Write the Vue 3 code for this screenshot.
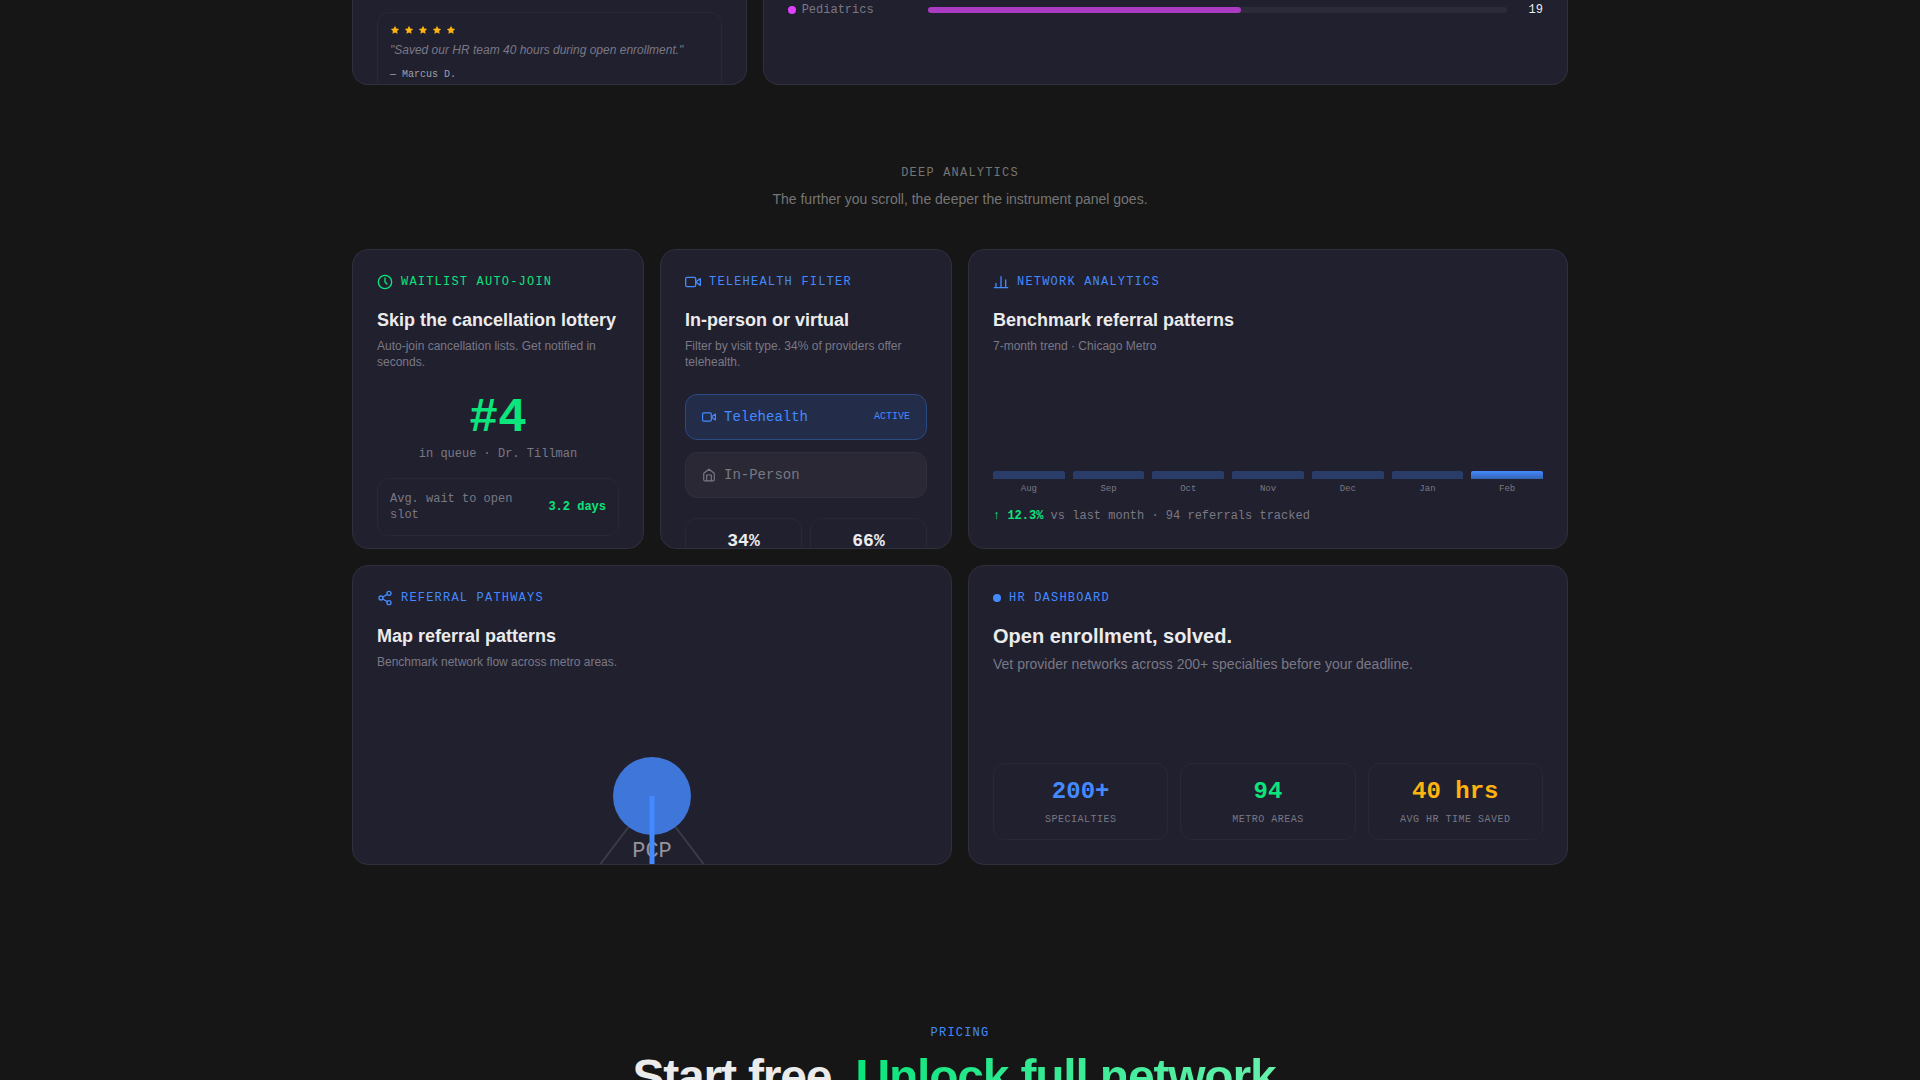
<script setup>
const specialties = [{ name: 'Pediatrics', share: 54, count: 19 }]
const months = ['Aug', 'Sep', 'Oct', 'Nov', 'Dec', 'Jan', 'Feb']
const hrStats = [
  { value: '200+', label: 'Specialties', tone: 'blue' },
  { value: '94', label: 'Metro areas', tone: 'green' },
  { value: '40 hrs', label: 'Avg HR time saved', tone: 'amber' }
]
</script>

<template>
  <main class="page">
    <section class="top-grid">
      <article class="card reviews">
        <div class="review">
          <div class="stars" role="img" aria-label="5 stars">
            <svg v-for="n in 5" :key="n" viewBox="0 0 24 24" width="10" height="10">
              <path fill="currentColor" d="M12 2l3.100 6.300 6.900 1-5 4.900 1.200 6.800L12 17.800 5.800 21 7 14.200 2 9.300l6.900-1z" />
            </svg>
          </div>
          <p class="quote">"Saved our HR team 40 hours during open enrollment."</p>
          <p class="author">— Marcus D.</p>
        </div>
      </article>
      <article class="card specialties">
        <div v-for="s in specialties" :key="s.name" class="specialty">
          <span class="specialty-name"><i class="dot pink"></i>{{ s.name }}</span>
          <span class="track"><span class="fill" :style="{ width: s.share + '%' }"></span></span>
          <span class="count">{{ s.count }}</span>
        </div>
      </article>
    </section>

    <header class="section-head">
      <p class="eyebrow">Deep analytics</p>
      <p class="lead">The further you scroll, the deeper the instrument panel goes.</p>
    </header>

    <section class="grid">
      <article class="card">
        <div class="label green">
          <svg class="icon" viewBox="0 0 24 24"><circle cx="12" cy="12" r="10" /><path d="M12 6v6l3 3" /></svg>
          <span>Waitlist auto-join</span>
        </div>
        <h3>Skip the cancellation lottery</h3>
        <p class="sub">Auto-join cancellation lists. Get notified in seconds.</p>
        <div class="queue">
          <strong class="queue-no green">#4</strong>
          <span class="queue-text">in queue · Dr. Tillman</span>
        </div>
        <div class="wait">
          <span>Avg. wait to open slot</span>
          <strong class="green">3.2 days</strong>
        </div>
      </article>

      <article class="card">
        <div class="label blue">
          <svg class="icon" viewBox="0 0 24 24"><rect x="1" y="5" width="15" height="14" rx="2" /><path d="M23 7l-7 5 7 5z" /></svg>
          <span>Telehealth filter</span>
        </div>
        <h3>In-person or virtual</h3>
        <p class="sub">Filter by visit type. 34% of providers offer telehealth.</p>
        <div class="visits">
          <button type="button" class="visit active">
            <svg class="icon small" viewBox="0 0 24 24"><rect x="1" y="5" width="15" height="14" rx="2" /><path d="M23 7l-7 5 7 5z" /></svg>
            <span>Telehealth</span>
            <span class="state">ACTIVE</span>
          </button>
          <button type="button" class="visit">
            <svg class="icon small" viewBox="0 0 24 24"><path d="M3 9l9-7 9 7v11a2 2 0 0 1-2 2H5a2 2 0 0 1-2-2z" /><path d="M8 22V12h8v10" /></svg>
            <span>In-Person</span>
          </button>
        </div>
        <div class="split">
          <div class="split-box">34%</div>
          <div class="split-box">66%</div>
        </div>
      </article>

      <article class="card wide">
        <div class="label blue">
          <svg class="icon" viewBox="0 0 24 24"><path d="M2 20.500h20M4.500 20v-6M12 20V4M19 20V9" /></svg>
          <span>Network analytics</span>
        </div>
        <h3>Benchmark referral patterns</h3>
        <p class="sub">7-month trend · Chicago Metro</p>
        <div class="chart">
          <div v-for="(m, i) in months" :key="m" class="month">
            <span class="bar" :class="{ current: i === months.length - 1 }"></span>
            <span>{{ m }}</span>
          </div>
        </div>
        <p class="trend"><strong class="green">↑ 12.3%</strong> vs last month · 94 referrals tracked</p>
      </article>

      <article class="card wide">
        <div class="label blue">
          <svg class="icon" viewBox="0 0 24 24"><circle cx="18" cy="5" r="3" /><circle cx="6" cy="12" r="3" /><circle cx="18" cy="19" r="3" /><path d="M8.600 13.500l6.800 4M15.400 6.500l-6.800 4" /></svg>
          <span>Referral pathways</span>
        </div>
        <h3>Map referral patterns</h3>
        <p class="sub">Benchmark network flow across metro areas.</p>
        <svg class="pathways" viewBox="0 0 550 240">
          <path class="edge" d="M275 110L134 296M275 110L416 296" />
          <circle class="node" cx="275" cy="110" r="39" />
          <text x="275" y="171" text-anchor="middle">PCP</text>
          <path class="edge main" d="M275 110V296" />
        </svg>
      </article>

      <article class="card wide hr">
        <div class="label blue"><i class="dot"></i><span>HR dashboard</span></div>
        <h3 class="large">Open enrollment, solved.</h3>
        <p class="sub large">Vet provider networks across 200+ specialties before your deadline.</p>
        <div class="stats">
          <div v-for="s in hrStats" :key="s.label" class="stat">
            <strong :class="s.tone">{{ s.value }}</strong>
            <span>{{ s.label }}</span>
          </div>
        </div>
      </article>
    </section>

    <section class="pricing">
      <p class="eyebrow blue">Pricing</p>
      <h2>Start free. <span class="gradient">Unlock full network.</span></h2>
    </section>
  </main>
</template>

<style>
body {
  margin: 0;
  background: #161616;
}
</style>

<style scoped>
* {
  box-sizing: border-box;
}
.page {
  max-width: 1280px;
  height: 100vh;
  margin: 0 auto;
  padding: 0 32px;
  overflow: hidden;
  color: #ebebec;
  font-family: "Liberation Sans", Arial, sans-serif;
}
p, h2, h3 {
  margin: 0;
}
.card {
  display: flex;
  flex-direction: column;
  min-width: 0;
  padding: 24px;
  overflow: hidden;
  border: 1px solid #302f3c;
  border-radius: 16px;
  background: #21202f;
}
.green { color: #0be57c; }
.blue { color: #448aff; }
.amber { color: #ffb310; }

.top-grid {
  display: grid;
  grid-template-columns: repeat(3, 1fr);
  gap: 16px;
  height: 85px;
}
.top-grid .card {
  padding-top: 0;
  border-top: 0;
  border-radius: 0 0 16px 16px;
}
.specialties {
  grid-column: span 2;
}
.review {
  flex: none;
  margin-top: 12px;
  padding: 12px;
  border: 1px solid #292838;
  border-radius: 12px;
}
.stars {
  display: flex;
  gap: 4px;
  color: #ffb310;
}
.quote {
  margin-top: 6px;
  font-size: 12px;
  font-style: italic;
  line-height: 18px;
  color: #797884;
}
.author {
  margin-top: 8px;
  font: 10px/16px "Liberation Mono", monospace;
  color: #a09fa8;
}
.specialty {
  display: flex;
  align-items: center;
  gap: 12px;
  height: 20px;
  font: 12px/16px "Liberation Mono", monospace;
}
.specialty-name {
  display: flex;
  align-items: center;
  gap: 6px;
  width: 128px;
  color: #797884;
}
.dot {
  width: 8px;
  height: 8px;
  border-radius: 50%;
  background: #448aff;
}
.dot.pink {
  background: #e040fb;
}
.track {
  flex: 1;
  height: 6px;
  border-radius: 3px;
  background: #2c2b39;
}
.fill {
  display: block;
  height: 6px;
  border-radius: 3px;
  background: #ab3bc2;
}
.count {
  width: 24px;
  text-align: right;
}

.section-head {
  padding: 80px 0 40px;
  text-align: center;
}
.eyebrow {
  font: 12px/16px "Liberation Mono", monospace;
  letter-spacing: 0.1em;
  text-transform: uppercase;
}
.section-head .eyebrow {
  color: #757575;
}
.lead {
  margin-top: 8px;
  font-size: 14px;
  line-height: 20px;
  color: #757575;
}

.grid {
  display: grid;
  grid-template-columns: repeat(4, 1fr);
  grid-auto-rows: 300px;
  gap: 16px;
}
.wide {
  grid-column: span 2;
}
.card > * {
  flex: none;
}
.label {
  display: flex;
  align-items: center;
  gap: 8px;
  height: 16px;
  font: 12px/16px "Liberation Mono", monospace;
  letter-spacing: 0.1em;
  text-transform: uppercase;
}
.icon {
  flex: none;
  width: 16px;
  height: 16px;
  fill: none;
  stroke: currentColor;
  stroke-width: 2;
  stroke-linecap: round;
  stroke-linejoin: round;
}
.icon.small {
  width: 14px;
  height: 14px;
}
h3 {
  margin-top: 16px;
  font-size: 18px;
  line-height: 28px;
}
h3.large {
  font-size: 20px;
}
.sub {
  margin-top: 4px;
  font-size: 12px;
  line-height: 16px;
  color: #797884;
}
.sub.large {
  font-size: 14px;
  line-height: 20px;
}
.queue {
  display: flex;
  flex-direction: column;
  align-items: center;
  margin-top: 24px;
  font-family: "Liberation Mono", monospace;
}
.queue-no {
  font-size: 48px;
  line-height: 48px;
}
.queue-text {
  margin-top: 4px;
  font-size: 12px;
  line-height: 16px;
  color: #797884;
}
.wait {
  display: flex;
  align-items: center;
  justify-content: space-between;
  margin-top: 16px;
  padding: 12px;
  border: 1px solid #292838;
  border-radius: 12px;
  font: 12px/16px "Liberation Mono", monospace;
  color: #797884;
}
.wait strong {
  flex: none;
}
.wait span {
  width: 136px;
}
.visits {
  display: grid;
  gap: 12px;
  margin-top: 24px;
}
.visit {
  display: flex;
  align-items: center;
  gap: 8px;
  height: 46px;
  padding: 0 16px;
  border: 1px solid #302f3c;
  border-radius: 12px;
  background: #292834;
  color: #797884;
  font: 14px/20px "Liberation Mono", monospace;
}
.visit.active {
  border-color: #2a4a84;
  background: #232d4a;
  color: #448aff;
}
.state {
  margin-left: auto;
  font-size: 10px;
}
.split {
  display: grid;
  grid-template-columns: 1fr 1fr;
  gap: 8px;
  margin-top: 20px;
}
.split-box {
  height: 64px;
  padding-top: 8px;
  border: 1px solid #292838;
  border-radius: 12px;
  text-align: center;
  font: bold 18px/28px "Liberation Mono", monospace;
}
.chart {
  display: flex;
  gap: 8px;
  margin-top: auto;
}
.month {
  flex: 1;
  text-align: center;
  font: 9px/14px "Liberation Mono", monospace;
  color: #797884;
}
.bar {
  display: block;
  height: 8px;
  margin-bottom: 3px;
  border-radius: 2px 2px 0 0;
  background: #293d68;
}
.bar.current {
  background: linear-gradient(#448aff, #3562b0);
}
.trend {
  margin-top: 12px;
  font: 12px/16px "Liberation Mono", monospace;
  color: #797884;
}
.pathways {
  width: 100%;
  margin-top: 16px;
}
.node {
  fill: #3f76d9;
}
.edge {
  fill: none;
  stroke: #3b3a48;
  stroke-width: 2;
}
.edge.main {
  stroke: #448aff;
  stroke-width: 5;
}
.pathways text {
  fill: #94939c;
  font: 22px "Liberation Mono", monospace;
}
.stats {
  display: grid;
  grid-template-columns: repeat(3, 1fr);
  gap: 12px;
  margin-top: auto;
}
.stat {
  display: flex;
  flex-direction: column;
  align-items: center;
  gap: 4px;
  padding: 12px 0;
  border: 1px solid #292838;
  border-radius: 12px;
  font-family: "Liberation Mono", monospace;
}
.stat strong {
  font-size: 24px;
  line-height: 32px;
}
.stat span {
  font-size: 10px;
  line-height: 15px;
  letter-spacing: 0.05em;
  text-transform: uppercase;
  color: #797884;
}
.pricing {
  padding-top: 160px;
  text-align: center;
}
h2 {
  margin-top: 12px;
  font-size: 48px;
  line-height: 48px;
  letter-spacing: -0.025em;
}
.gradient {
  background: linear-gradient(90deg, #0be57c, #69f0ae);
  background-clip: text;
  color: transparent;
}
</style>
